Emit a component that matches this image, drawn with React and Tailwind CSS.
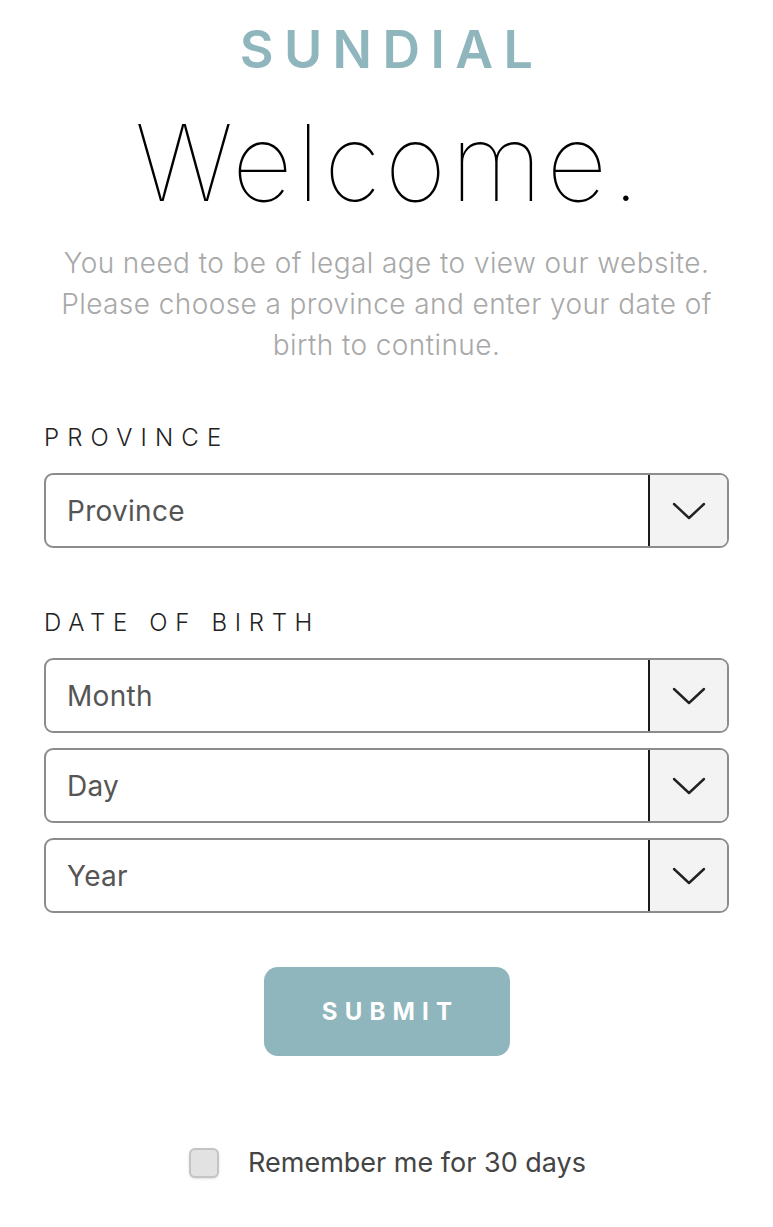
import React, { useState } from "react";

const FONT = { fontFamily: "Inter, 'Open Sans', sans-serif" };

function Chevron() {
  return (
    <svg width="34" height="20" viewBox="0 0 34 20" fill="none">
      <path d="M2 3 L17 17 L32 3" stroke="#222" strokeWidth="2.4" strokeLinecap="round" strokeLinejoin="round" />
    </svg>
  );
}

function SelectBox({ placeholder }) {
  return (
    <div className="flex h-[75px] w-full overflow-hidden rounded-[9px] border-2 border-[#8c8c8c] bg-white">
      <div className="flex flex-1 items-center pl-[21px] text-[28px] tracking-[0.01em] text-[#555]">{placeholder}</div>
      <div className="flex w-[79px] items-center justify-center border-l-2 border-[#1a1a1a] bg-[#f3f3f3]">
        <Chevron />
      </div>
    </div>
  );
}

export default function App() {
  const [remember, setRemember] = useState(false);

  return (
    <div className="min-h-[1227px] bg-white" style={FONT}>
      <div className="flex flex-col items-center px-[44px]">
        <div className="mt-[22px] pl-[10px] text-[52px] font-semibold leading-[56px] tracking-[0.2em] text-[#8fb5bd]">
          SUNDIAL
        </div>
        <h1 className="mt-[30px] pl-[6px] text-[106px] font-thin leading-[110px] tracking-[0.04em] text-black">
          Welcome.
        </h1>
        <p className="mt-[25px] text-center text-[28px] font-light leading-[41px] tracking-[0.015em] text-[#a8a8a8]">
          You need to be of legal age to view our website.
          <br />
          Please choose a province and enter your date of
          <br />
          birth to continue.
        </p>

        <div className="mt-[58px] w-full">
          <div className="text-[24px] font-light leading-[28px] tracking-[0.34em] text-[#222]">PROVINCE</div>
          <div className="mt-[21px]">
            <SelectBox placeholder="Province" />
          </div>

          <div className="mt-[61px] text-[24px] font-light leading-[28px] tracking-[0.32em] text-[#222]">DATE OF BIRTH</div>
          <div className="mt-[21px] flex flex-col gap-[15px]">
            <SelectBox placeholder="Month" />
            <SelectBox placeholder="Day" />
            <SelectBox placeholder="Year" />
          </div>
        </div>

        <button className="mt-[54px] flex h-[89px] w-[246px] items-center justify-center rounded-[14px] bg-[#8fb5bd] pl-[8px] text-[24px] font-bold tracking-[0.3em] text-white">
          SUBMIT
        </button>

        <label className="mt-[91px] flex items-center gap-[29px] pl-[2px]">
          <span
            onClick={() => setRemember(!remember)}
            className="h-[30px] w-[30px] rounded-[6px] border-2 border-[#c4c4c4] bg-[#e2e2e2] shadow-sm"
          />
          <span className="text-[27px] font-normal leading-[32px] text-[#444]">Remember me for 30 days</span>
        </label>
      </div>
    </div>
  );
}
